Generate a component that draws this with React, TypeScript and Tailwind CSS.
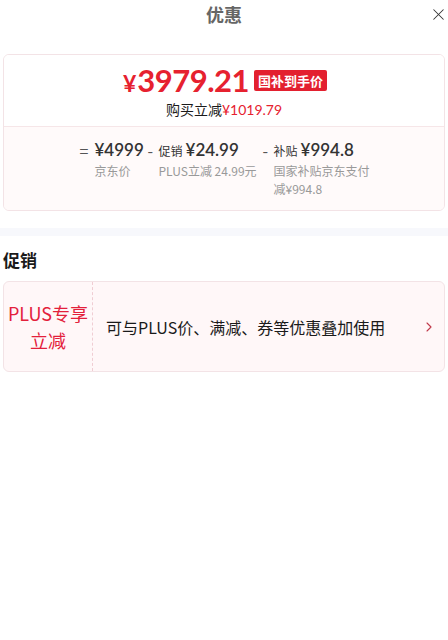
import { X, ChevronRight } from "lucide-react";

const num = { fontFamily: 'Lato, "Noto Sans CJK SC", sans-serif' };

const parts = [
  { sign: "=", tag: "", value: "¥4999", label: "京东价" },
  { sign: "-", tag: "促销", value: "¥24.99", label: "PLUS立减 24.99元" },
  { sign: "-", tag: "补贴", value: "¥994.8", label: "国家补贴京东支付减¥994.8" },
];

export default function App() {
  return (
    <div
      className="min-h-[640px] w-[448px] bg-white text-[#1a1a1a]"
      style={{ fontFamily: '"Noto Sans CJK SC", "Noto Sans", sans-serif' }}
    >
      <header className="relative flex h-[28px] items-center justify-center">
        <h1 className="text-[18px] font-bold text-[#666]">优惠</h1>
        <button className="absolute right-[0px] top-[5px] text-[#333]" aria-label="关闭">
          <X size={19} strokeWidth={1.3} />
        </button>
      </header>

      <section className="mx-[3px] mt-[26px] overflow-hidden rounded-[6px] border border-[#f3e3e6]">
        <div className="flex h-[71px] flex-col items-center bg-white pt-[10px]">
          <div className="flex items-center pl-[2px]">
            <span className="font-bold leading-none text-[#e6212f]" style={num}>
              <span className="mr-[1px] text-[23px]">¥</span>
              <span className="text-[31px] tracking-[-0.5px]">3979.21</span>
            </span>
            <span className="ml-[5px] rounded-[2px] bg-[#e3202f] px-[4px] text-[13px] font-bold leading-[21px] text-white">
              国补到手价
            </span>
          </div>
          <p className="mt-[4px] text-[14px] leading-[18px] text-[#1a1a1a]">
            购买立减<span className="text-[#e6212f]" style={num}>¥1019.79</span>
          </p>
        </div>
        <div className="flex h-[84px] justify-center border-t border-[#f6e6e8] bg-[#fffafa] pl-[4px] pt-[12px]">
          {parts.map((p, i) => (
            <div key={i} className={`flex items-start ${i === 0 ? "w-[68px]" : i === 1 ? "w-[115px]" : "w-[110px]"}`}>
              <span className={`text-[16px] leading-[22px] text-[#555] ${i === 0 ? "w-[15px]" : "w-[11px]"}`}>
                {p.sign}
              </span>
              <div className="flex flex-col">
                <div className="flex items-baseline text-[#333]">
                  {p.tag && <span className="mr-[3px] text-[12px]">{p.tag}</span>}
                  <span className="text-[17px] font-semibold leading-[22px]" style={num}>
                    {p.value}
                  </span>
                </div>
                <span className={`mt-[1px] text-[12px] leading-[18px] text-[#999] ${i === 2 ? "w-[98px]" : "whitespace-nowrap"}`}>
                  {p.label}
                </span>
              </div>
            </div>
          ))}
        </div>
      </section>

      <div className="mt-[17px] h-[8px] bg-[#f7f8fc]" />

      <h2 className="mx-[3px] mt-[13px] text-[17px] font-bold leading-[22px]">促销</h2>

      <section className="mx-[3px] mt-[10px] flex h-[91px] items-center rounded-[6px] border border-[#f3e3e6] bg-[#fff7f8]">
        <div className="flex h-full w-[89px] items-center justify-center border-r border-dashed border-[#f0cdd3] text-center text-[18px] leading-[27px] text-[#e3203b]">
          <span>
            PLUS专享
            <br />
            立减
          </span>
        </div>
        <p className="ml-[13px] flex-1 text-[16px]">可与PLUS价、满减、券等优惠叠加使用</p>
        <ChevronRight size={16} strokeWidth={1.6} className="mr-[7px] text-[#c0394a]" />
      </section>
    </div>
  );
}
